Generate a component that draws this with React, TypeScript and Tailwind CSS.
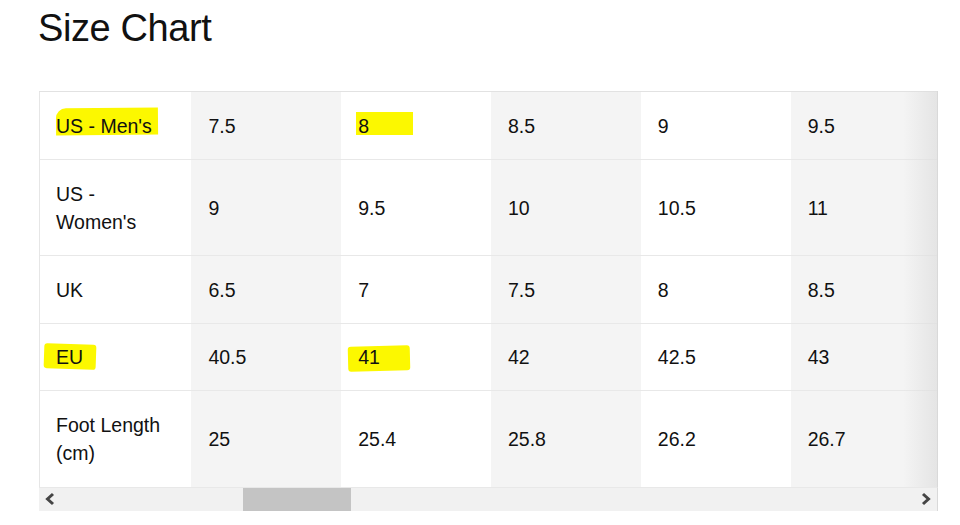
import React from 'react';

interface Row {
  label: string[];
  values: string[];
  tall?: boolean;
}

const rows: Row[] = [
  { label: ["US - Men's"], values: ['7.5', '8', '8.5', '9', '9.5'] },
  { label: ['US -', "Women's"], values: ['9', '9.5', '10', '10.5', '11'], tall: true },
  { label: ['UK'], values: ['6.5', '7', '7.5', '8', '8.5'] },
  { label: ['EU'], values: ['40.5', '41', '42', '42.5', '43'] },
  { label: ['Foot Length', '(cm)'], values: ['25', '25.4', '25.8', '26.2', '26.7'], tall: true },
];

const colWidths = ['w-[150px]', 'w-[150px]', 'w-[150px]', 'w-[150px]', 'w-[147px]'];

// highlighter marks, keyed by "row-col" (col -1 = label column)
const marks: Record<string, string> = {
  '0--1': 'left-[16px] top-[16px] w-[102px] h-[27px] rounded-tl-[10px] -rotate-[0.5deg]',
  '0-1': 'left-[15px] top-[20px] w-[57px] h-[23px]',
  '3--1': 'left-[4px] top-[20px] w-[52px] h-[25px] rotate-[2deg] rounded-[3px]',
  '3-1': 'left-[7px] top-[22px] w-[62px] h-[25px] -rotate-[1.5deg] rounded-[3px]',
};

const Mark: React.FC<{ id: string }> = ({ id }) =>
  marks[id] ? <span className={`absolute bg-[#fcf800] ${marks[id]}`} /> : null;

const Chevron: React.FC<{ dir: 'left' | 'right' }> = ({ dir }) => (
  <svg width="12" height="14" viewBox="0 0 12 14">
    <path
      d={dir === 'left' ? 'M9 2 L3.5 7 L9 12' : 'M3 2 L8.5 7 L3 12'}
      fill="none"
      stroke="#454545"
      strokeWidth="3"
    />
  </svg>
);

export default function App() {
  return (
    <div
      className="w-[960px] h-[525px] bg-white text-[#111] pl-[39px] pt-[8px]"
      style={{ fontFamily: '"Liberation Sans", Arial, sans-serif' }}
    >
      <h1 className="text-[38px] leading-[41px] tracking-[-0.4px] -ml-[1px] font-normal">Size Chart</h1>

      <div className="mt-[42px] w-[899px] relative">
        <table className="border-collapse table-fixed text-[19.5px] leading-[28px]">
          <tbody>
            {rows.map((row, r) => (
              <tr key={r} className={row.tall ? 'h-[96px]' : r === 3 ? 'h-[67px]' : 'h-[68px]'}>
                <td
                  className={`relative w-[152px] pl-[16px] bg-white border-l border-l-[#e6e6e6] border-t ${
                    r === 0 ? 'border-t-[#e2e2e2]' : 'border-t-[#e8e8e8]'
                  }`}
                >
                  <Mark id={`${r}--1`} />
                  <div className="relative">
                    {row.label.map((l) => (
                      <div key={l}>{l}</div>
                    ))}
                  </div>
                </td>
                {row.values.map((v, c) => (
                  <td
                    key={c}
                    className={`relative ${colWidths[c]} pl-[17px] border-t ${
                      r === 0 ? 'border-t-[#e2e2e2]' : 'border-t-[#e8e8e8]'
                    } ${c % 2 === 0 ? 'bg-[#f4f4f4]' : 'bg-white'} ${
                      c === 4 ? 'border-r border-r-[#d9d9d9]' : ''
                    }`}
                  >
                    <Mark id={`${r}-${c}`} />
                    <span className="relative">{v}</span>
                  </td>
                ))}
              </tr>
            ))}
          </tbody>
        </table>

        {/* right edge fade shadow */}
        <div className="absolute right-[1px] top-0 bottom-[24px] w-[34px] bg-gradient-to-r from-transparent to-[#dedede]/70 pointer-events-none" />

        {/* scrollbar */}
        <div className="flex items-center h-[24px] bg-[#f1f1f1] border-t border-t-[#e8e8e8] border-r border-r-[#d9d9d9]">
          <div className="w-[204px] pl-[5px] flex items-center">
            <Chevron dir="left" />
          </div>
          <div className="w-[108px] h-full bg-[#c4c4c4]" />
          <div className="flex-1" />
          <div className="pr-[5px] flex items-center">
            <Chevron dir="right" />
          </div>
        </div>
      </div>
    </div>
  );
}
